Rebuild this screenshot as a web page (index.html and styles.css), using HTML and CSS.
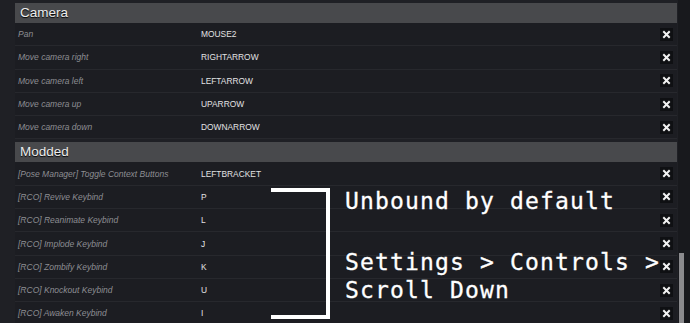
FILE: index.html
```html
<!DOCTYPE html>
<html>
<head>
<meta charset="utf-8">
<link rel="stylesheet" href="styles.css">
</head>
<body>
<div class="screen">
  <div class="panel">
    <section class="section">
      <div class="section-head">Camera</div>
      <div class="row"><span class="action">Pan</span><span class="key">MOUSE2</span><span class="clear"><svg viewBox="0 0 13 13"><path d="M4 4L9 9M9 4L4 9"/></svg></span></div>
      <div class="row"><span class="action">Move camera right</span><span class="key">RIGHTARROW</span><span class="clear"><svg viewBox="0 0 13 13"><path d="M4 4L9 9M9 4L4 9"/></svg></span></div>
      <div class="row"><span class="action">Move camera left</span><span class="key">LEFTARROW</span><span class="clear"><svg viewBox="0 0 13 13"><path d="M4 4L9 9M9 4L4 9"/></svg></span></div>
      <div class="row"><span class="action">Move camera up</span><span class="key">UPARROW</span><span class="clear"><svg viewBox="0 0 13 13"><path d="M4 4L9 9M9 4L4 9"/></svg></span></div>
      <div class="row"><span class="action">Move camera down</span><span class="key">DOWNARROW</span><span class="clear"><svg viewBox="0 0 13 13"><path d="M4 4L9 9M9 4L4 9"/></svg></span></div>
    </section>
    <section class="section">
      <div class="section-head">Modded</div>
      <div class="row"><span class="action">[Pose Manager] Toggle Context Buttons</span><span class="key">LEFTBRACKET</span><span class="clear"><svg viewBox="0 0 13 13"><path d="M4 4L9 9M9 4L4 9"/></svg></span></div>
      <div class="row"><span class="action">[RCO] Revive Keybind</span><span class="key">P</span><span class="clear"><svg viewBox="0 0 13 13"><path d="M4 4L9 9M9 4L4 9"/></svg></span></div>
      <div class="row"><span class="action">[RCO] Reanimate Keybind</span><span class="key">L</span><span class="clear"><svg viewBox="0 0 13 13"><path d="M4 4L9 9M9 4L4 9"/></svg></span></div>
      <div class="row"><span class="action">[RCO] Implode Keybind</span><span class="key">J</span><span class="clear"><svg viewBox="0 0 13 13"><path d="M4 4L9 9M9 4L4 9"/></svg></span></div>
      <div class="row"><span class="action">[RCO] Zombify Keybind</span><span class="key">K</span><span class="clear"><svg viewBox="0 0 13 13"><path d="M4 4L9 9M9 4L4 9"/></svg></span></div>
      <div class="row"><span class="action">[RCO] Knockout Keybind</span><span class="key">U</span><span class="clear"><svg viewBox="0 0 13 13"><path d="M4 4L9 9M9 4L4 9"/></svg></span></div>
      <div class="row"><span class="action">[RCO] Awaken Keybind</span><span class="key">I</span><span class="clear"><svg viewBox="0 0 13 13"><path d="M4 4L9 9M9 4L4 9"/></svg></span></div>
    </section>
  </div>
  <div class="scrollbar"><div class="thumb"></div></div>

  <div class="bracket"></div>
  <div class="note">
    <div class="note-line">Unbound by default</div>
    <div class="note-line note-second">Settings &gt; Controls &gt;</div>
    <div class="note-line">Scroll Down</div>
  </div>
</div>
</body>
</html>
```

FILE: styles.css
```css
html, body {
  margin: 0;
  padding: 0;
  background: #1f2025;
  overflow: hidden;
}

.screen {
  position: relative;
  width: 690px;
  height: 323px;
  display: flex;
  overflow: hidden;
  font-family: "Liberation Sans", Arial, sans-serif;
}

.panel {
  flex: 1;
  padding-left: 15px;
  padding-right: 1px;
  display: flex;
  flex-direction: column;
}

.section {
  margin-top: 3px;
  display: flex;
  flex-direction: column;
}

.section-head {
  height: 20px;
  box-sizing: border-box;
  padding-left: 5px;
  background: #48494c;
  color: #ececec;
  font-size: 13.5px;
  line-height: 20px;
  text-shadow: 0 1px 1px #000;
}

.row {
  height: 23.3px;
  box-sizing: border-box;
  display: flex;
  align-items: center;
  background: #1c1d22;
  border-bottom: 1px solid #27282d;
}

.action {
  width: 183px;
  padding-left: 3px;
  font-size: 8.5px;
  font-style: italic;
  color: #8d8e93;
  white-space: nowrap;
}

.key {
  flex: 1;
  font-size: 8.4px;
  color: #e2e2e4;
}

.clear {
  width: 13px;
  height: 13px;
  margin-right: 4px;
  background: #0f1013;
  display: flex;
}

.clear svg {
  width: 13px;
  height: 13px;
}

.clear path {
  stroke: #f2f2f2;
  stroke-width: 2;
  stroke-linecap: square;
  fill: none;
}

.scrollbar {
  width: 12px;
  background: #18191d;
  position: relative;
}

.thumb {
  position: absolute;
  left: 1px;
  top: 253px;
  width: 5px;
  height: 80px;
  background: #8b8b8e;
}

.bracket {
  position: absolute;
  left: 271px;
  top: 188px;
  width: 55px;
  height: 123px;
  border: 4px solid #ffffff;
  border-left: none;
}

.note {
  position: absolute;
  left: 345px;
  top: 187px;
  color: #ffffff;
  font-family: "DejaVu Sans Mono", monospace;
  font-size: 23px;
  letter-spacing: 1.15px;
  line-height: 28px;
  white-space: nowrap;
  -webkit-text-stroke: 0.3px #ffffff;
}

.note-second {
  margin-top: 33px;
}
```
